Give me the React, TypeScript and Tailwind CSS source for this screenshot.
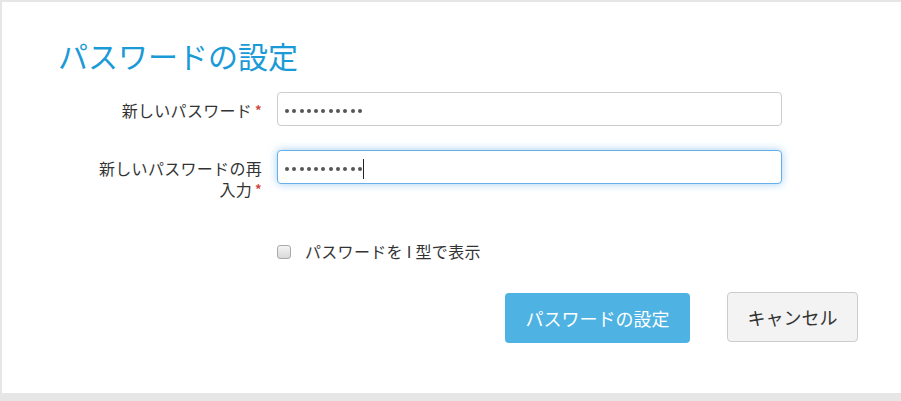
const font = "font-['Noto_Sans_CJK_JP','Liberation_Sans',sans-serif]";

function Dots({ count = 11 }: { count?: number }) {
  return (
    <div className="flex items-center gap-[3.3px] pt-[4px]">
      {Array.from({ length: count }).map((_, i) => (
        <span key={i} className="block w-[4px] h-[4px] rounded-full bg-[#555]" />
      ))}
    </div>
  );
}

function Required() {
  return (
    <span className="inline-block align-middle ml-[3px] -mt-[6px] text-[#d0463e] text-[13px] font-bold leading-none">
      *
    </span>
  );
}

function Row({
  label,
  focused,
  className = '',
}: {
  label: string;
  focused?: boolean;
  className?: string;
}) {
  return (
    <div className={`flex items-start ${className}`}>
      <label className="ml-[30px] w-[174px] text-right text-[16px] leading-[21px] text-[#333] pt-[8px] tracking-[0.3px]">
        {label}
        <Required />
      </label>
      <div
        className={`ml-[15px] w-[505px] h-[34px] rounded-[4px] border bg-white flex items-center pl-[7px] ${
          focused
            ? 'border-[#66afe9] shadow-[0_0_8px_rgba(102,175,233,0.6)]'
            : 'border-[#ccc]'
        }`}
      >
        <Dots />
        {focused && <span className="ml-[1px] mt-[3px] block w-[1px] h-[20px] bg-[#222]" />}
      </div>
    </div>
  );
}

export default function App() {
  return (
    <div className={`min-h-[401px] bg-[#e6e6e6] pt-[2px] pl-[2px] ${font}`}>
      <div className="bg-white h-[391px] pl-[56px] pt-[38px]">
        <h1 className="text-[30px] leading-[30px] text-[#1a9ad7] font-normal">パスワードの設定</h1>

        <Row label="新しいパスワード" className="mt-[22px]" />
        <Row label="新しいパスワードの再入力" focused className="mt-[24px]" />

        <div className="mt-[41px] ml-[219px] flex items-center gap-[14px] text-[16px] leading-[21px] text-[#333]">
          <span className="block w-[14px] h-[14px] rounded-[3px] border border-[#a9a9a9] bg-gradient-to-b from-[#f4f4f4] to-[#d9d9d9]" />
          <span className="tracking-[0.3px]">パスワードを I 型で表示</span>
        </div>

        <div className="mt-[30px] ml-[447px] flex items-start gap-[37px]">
          <button className="mt-[1px] w-[185px] h-[50px] rounded-[4px] bg-[#4eb2e3] text-white text-[18px]">
            パスワードの設定
          </button>
          <button className="w-[131px] h-[50px] rounded-[4px] bg-[#f3f3f3] border border-[#ccc] text-[#333] text-[18px]">
            キャンセル
          </button>
        </div>
      </div>
    </div>
  );
}
